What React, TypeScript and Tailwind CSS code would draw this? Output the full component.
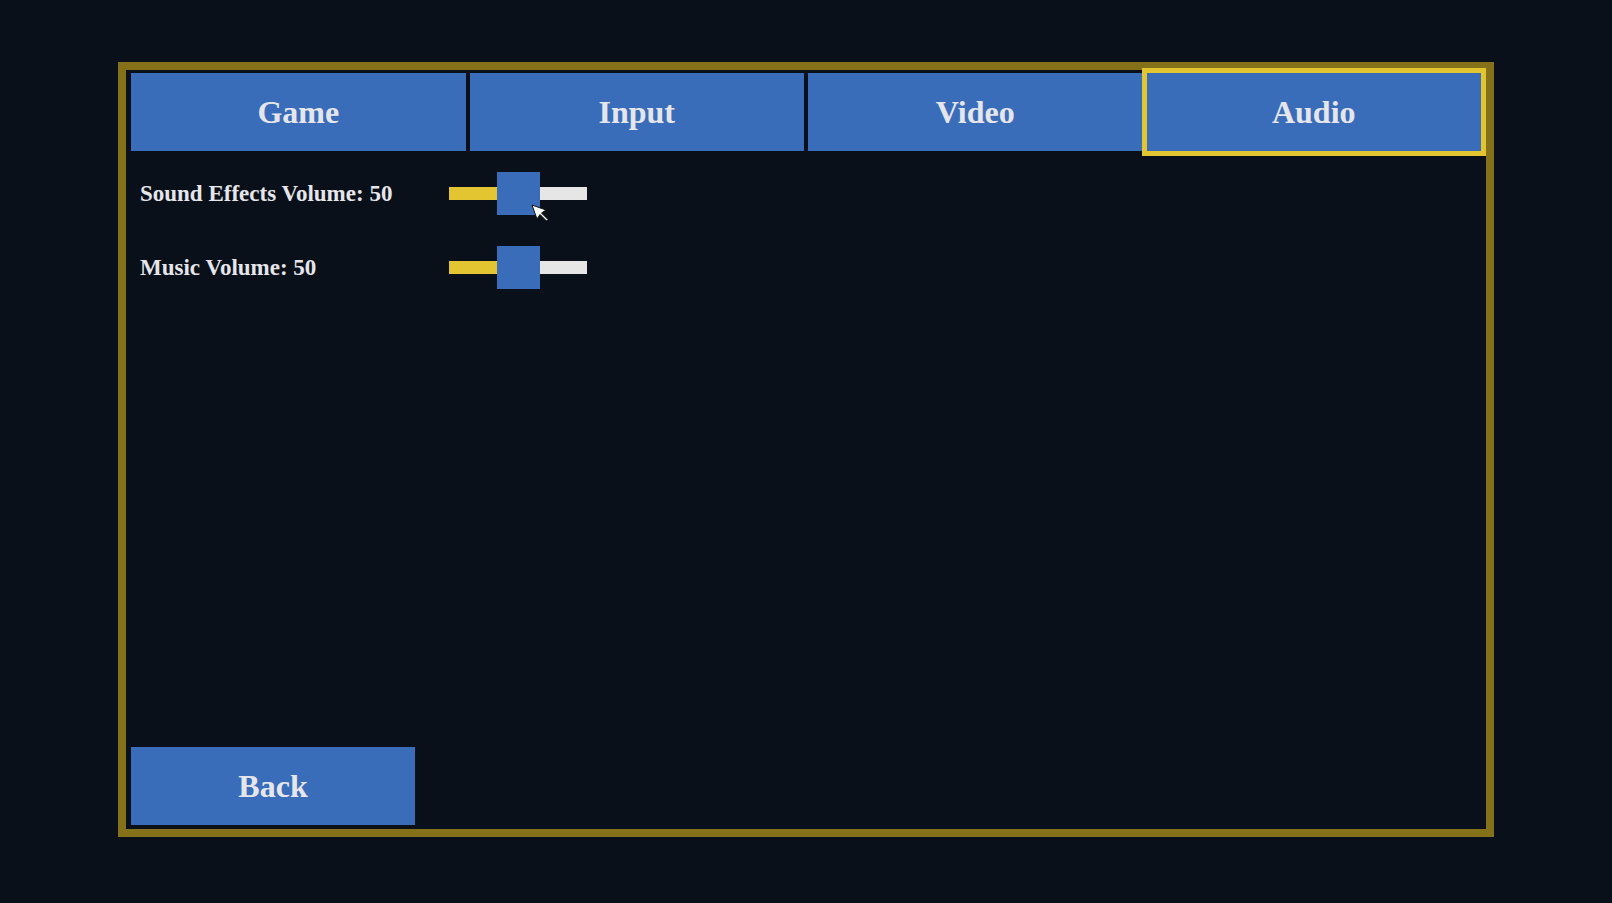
import { useState } from "react";

const TABS = ["Game", "Input", "Video", "Audio"];

function VolumeSlider({ label, value }: { label: string; value: number }) {
  // handle travels across track width minus handle width
  const offset = ((138 - 43) * value) / 100;
  return (
    <div className="flex items-center h-[43px]">
      <div className="w-[318px] pl-[9px] text-[23px] font-bold text-[#e6e6ea] leading-none">
        {label}: {value}
      </div>
      <div className="relative w-[138px] h-[43px] flex items-center">
        <div className="w-full h-[13px] bg-[#e6e6e6]" />
        <div
          className="absolute left-0 top-[15px] h-[13px] bg-[#e3c532]"
          style={{ width: offset }}
        />
        <div
          className="absolute top-0 w-[43px] h-[43px] bg-[#396dba]"
          style={{ left: offset }}
        />
      </div>
    </div>
  );
}

export default function App() {
  const [tab, setTab] = useState("Audio");

  return (
    <div
      className="w-full h-[903px] bg-[#09101a] flex justify-center pt-[62px]"
      style={{ fontFamily: '"Liberation Serif", "DejaVu Serif", serif' }}
    >
      <div className="relative w-[1376px] h-[775px] border-8 border-[#85711a] flex flex-col px-[5px] pt-[3px] pb-[4px]">
        <div className="grid grid-cols-4 gap-[4px]">
          {TABS.map((t) => (
            <button
              key={t}
              onClick={() => setTab(t)}
              className={
                "h-[78px] bg-[#396dba] text-[32px] font-bold text-[#e6e6ea] flex items-center justify-center " +
                (tab === t ? "outline-[5px] outline-solid outline-[#e3c532]" : "")
              }
            >
              {t}
            </button>
          ))}
        </div>

        <div className="mt-[21px] flex flex-col gap-[31px]">
          <VolumeSlider label="Sound Effects Volume" value={50} />
          <VolumeSlider label="Music Volume" value={50} />
        </div>

        <button className="mt-auto w-[284px] h-[78px] bg-[#396dba] text-[32px] font-bold text-[#e6e6ea] flex items-center justify-center">
          Back
        </button>

        {/* mouse pointer */}
        <svg
          className="absolute left-[405px] top-[134px]"
          width="19"
          height="19"
          viewBox="0 0 19 19"
        >
          <path
            d="M1 1 L15 6 L10.5 9 L17 15.5 L15.5 17 L9 10.5 L6 15 Z"
            fill="#ffffff"
            stroke="#111111"
            strokeWidth="1"
            strokeLinejoin="round"
          />
        </svg>
      </div>
    </div>
  );
}
